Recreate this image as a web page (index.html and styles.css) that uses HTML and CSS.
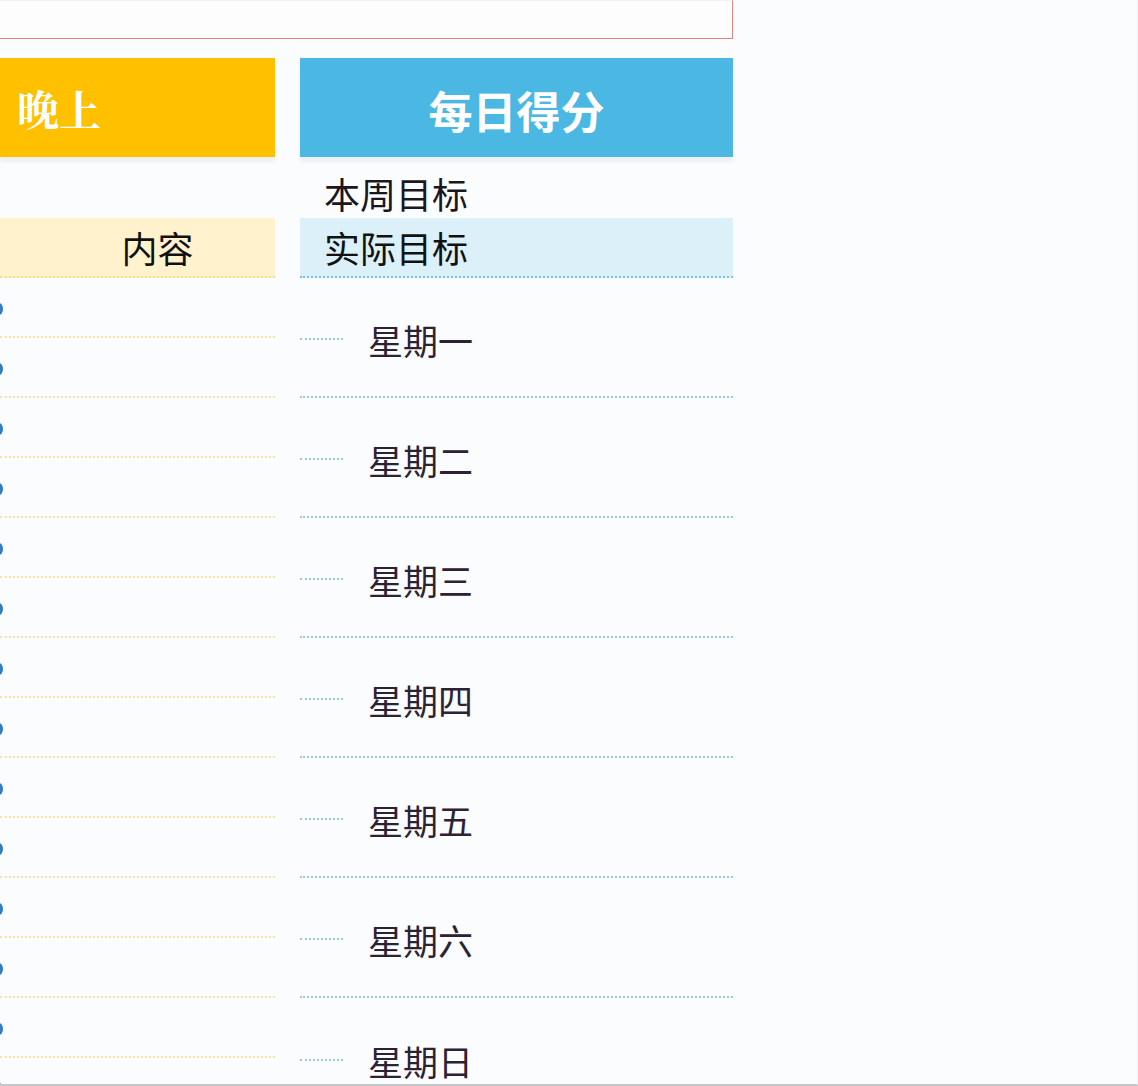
FILE: index.html
```html
<!DOCTYPE html>
<html lang="zh">
<head>
<meta charset="utf-8">
<link rel="stylesheet" href="styles.css">
</head>
<body>
<div class="page">
  <div class="topbox"></div>
  <div class="cols">
    <div class="col left">
      <div class="header orange">晚上</div>
      <div class="spacer"></div>
      <div class="label-row orange-light"><span class="center-label">内容</span></div>
      <div class="line-row"><span class="dot"></span></div>
      <div class="line-row"><span class="dot"></span></div>
      <div class="line-row"><span class="dot"></span></div>
      <div class="line-row"><span class="dot"></span></div>
      <div class="line-row"><span class="dot"></span></div>
      <div class="line-row"><span class="dot"></span></div>
      <div class="line-row"><span class="dot"></span></div>
      <div class="line-row"><span class="dot"></span></div>
      <div class="line-row"><span class="dot"></span></div>
      <div class="line-row"><span class="dot"></span></div>
      <div class="line-row"><span class="dot"></span></div>
      <div class="line-row"><span class="dot"></span></div>
      <div class="line-row"><span class="dot"></span></div>
      <div class="line-row"><span class="dot"></span></div>
    </div>
    <div class="col right">
      <div class="header blue">每日得分</div>
      <div class="spacer goal">本周目标</div>
      <div class="label-row blue-light">实际目标</div>
      <div class="day"><span class="lead"></span><span class="dname">星期一</span></div>
      <div class="day"><span class="lead"></span><span class="dname">星期二</span></div>
      <div class="day"><span class="lead"></span><span class="dname">星期三</span></div>
      <div class="day"><span class="lead"></span><span class="dname">星期四</span></div>
      <div class="day"><span class="lead"></span><span class="dname">星期五</span></div>
      <div class="day"><span class="lead"></span><span class="dname">星期六</span></div>
      <div class="day"><span class="lead"></span><span class="dname">星期日</span></div>
    </div>
  </div>
</div>
</body>
</html>
```
FILE: styles.css
```css
html, body {
  margin: 0;
  padding: 0;
  background: #fbfcfe;
}
body {
  font-family: "Noto Sans CJK SC", "Noto Sans", sans-serif;
}
.page {
  width: 1138px;
  height: 1086px;
  box-sizing: border-box;
  border-bottom: 2px solid #c6c7ca;
  border-right: 1px solid #eef0f3;
  overflow: hidden;
  position: relative;
}
.topbox {
  width: 734px;
  height: 39px;
  margin-left: -1px;
  box-sizing: border-box;
  border: 1px solid #e2857a;
  border-top-color: #eef0f3;
  background: #fdfdfe;
}
.cols {
  display: flex;
  gap: 25px;
  margin-top: 19px;
}
.col {
  display: flex;
  flex-direction: column;
}
.left { width: 275px; }
.right { width: 433px; }
.header {
  height: 99px;
  display: flex;
  align-items: center;
  color: #ffffff;
  font-weight: 700;
  box-shadow: 0 5px 3px rgba(150, 155, 170, 0.12);
}
.orange {
  background: #ffc000;
  padding-left: 17px;
  font-size: 42px;
  font-family: "Noto Serif CJK SC", "Noto Sans CJK SC", serif;
}
.blue {
  background: #4bb8e3;
  justify-content: center;
  font-size: 44px;
  padding-top: 4px;
  box-sizing: border-box;
}
.spacer {
  height: 61px;
}
.goal {
  box-sizing: border-box;
  padding-left: 24px;
  padding-top: 16px;
  font-size: 36px;
  line-height: 40px;
  color: #1c1620;
}
.label-row {
  height: 60px;
  box-sizing: border-box;
  display: flex;
  align-items: center;
  font-size: 36px;
  color: #111;
}
.orange-light {
  background: #fff2cd;
  border-bottom: 2px dotted #f7dd8c;
  justify-content: center;
}
.center-label {
  margin-left: 40px;
}
.blue-light {
  background: #dcf0fa;
  border-bottom: 2px dotted #7cc3dc;
  padding-left: 24px;
}
.line-row {
  height: 60px;
  box-sizing: border-box;
  border-bottom: 2px dotted #f9e4a4;
  position: relative;
}
.dot {
  position: absolute;
  left: -5px;
  top: 25px;
  width: 8px;
  height: 12px;
  border-radius: 50%;
  background: #2f7fc1;
}
.day {
  height: 120px;
  box-sizing: border-box;
  border-bottom: 2px dotted #8fd0e6;
  display: flex;
  align-items: center;
  padding-top: 6px;
}
.day:last-child {
  border-bottom: none;
}
.lead {
  width: 43px;
  border-top: 2px dotted #8fd0e6;
  margin-right: 25px;
  margin-top: -2px;
}
.dname {
  font-size: 35px;
  color: #2b2233;
  line-height: 40px;
}
```
